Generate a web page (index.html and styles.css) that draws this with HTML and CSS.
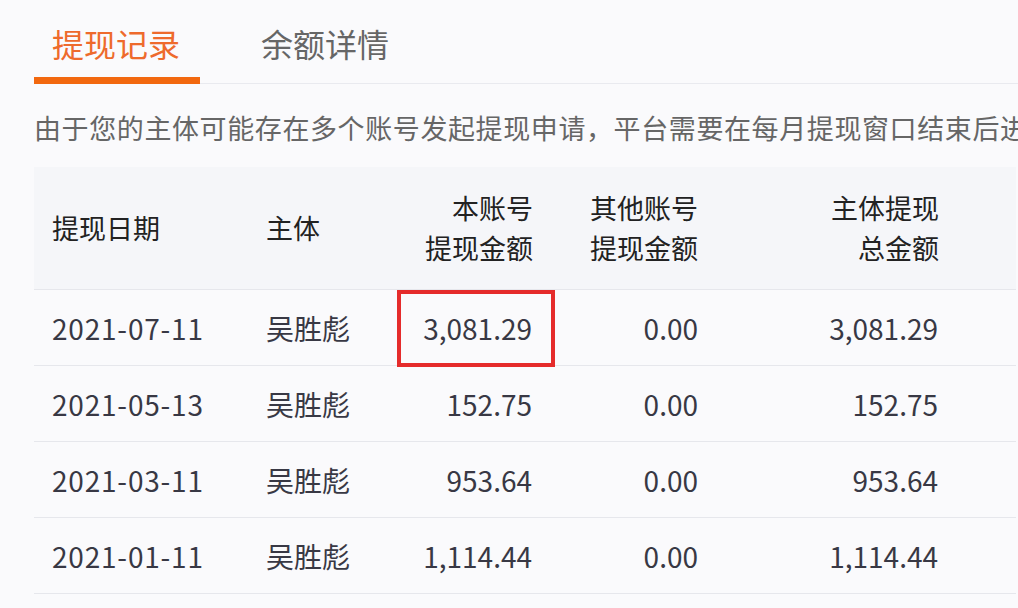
FILE: index.html
```html
<!DOCTYPE html>
<html lang="zh-CN">
<head>
<meta charset="utf-8">
<title>提现记录</title>
<link rel="stylesheet" href="styles.css">
</head>
<body>
<div class="page">
  <div class="tabs">
    <div class="tab active">提现记录</div>
    <div class="tab">余额详情</div>
  </div>
  <p class="notice">由于您的主体可能存在多个账号发起提现申请，平台需要在每月提现窗口结束后进</p>
  <table class="records">
    <colgroup>
      <col class="c-date"><col class="c-owner"><col class="c-own"><col class="c-other"><col class="c-total"><col>
    </colgroup>
    <thead>
      <tr>
        <th class="left">提现日期</th>
        <th class="left">主体</th>
        <th class="right">本账号<br>提现金额</th>
        <th class="right">其他账号<br>提现金额</th>
        <th class="right">主体提现<br>总金额</th>
        <th></th>
      </tr>
    </thead>
    <tbody>
      <tr>
        <td class="date">2021-07-11</td><td>吴胜彪</td><td class="right mark"><span class="hl"></span>3,081.29</td><td class="right">0.00</td><td class="right">3,081.29</td><td></td>
      </tr>
      <tr>
        <td class="date">2021-05-13</td><td>吴胜彪</td><td class="right">152.75</td><td class="right">0.00</td><td class="right">152.75</td><td></td>
      </tr>
      <tr>
        <td class="date">2021-03-11</td><td>吴胜彪</td><td class="right">953.64</td><td class="right">0.00</td><td class="right">953.64</td><td></td>
      </tr>
      <tr>
        <td class="date">2021-01-11</td><td>吴胜彪</td><td class="right">1,114.44</td><td class="right">0.00</td><td class="right">1,114.44</td><td></td>
      </tr>
    </tbody>
  </table>
</div>
</body>
</html>
```
FILE: styles.css
```css
html, body {
  margin: 0;
  padding: 0;
  background: #fafafc;
}
body {
  font-family: "Noto Sans CJK SC", "Noto Sans", sans-serif;
  color: #333;
  width: 1018px;
  height: 608px;
  overflow: hidden;
}
.page {
  padding-left: 34px;
  overflow: hidden;
}
.tabs {
  display: flex;
  border-bottom: 1px solid #e9eaef;
}
.tab {
  font-size: 32px;
  line-height: 48px;
  padding: 19px 20px 16px 18px;
  color: #666;
}
.tab + .tab {
  margin-left: 43px;
}
.tab.active {
  color: #ee6a2c;
  padding-bottom: 9px;
  border-bottom: 7px solid #f2680f;
  margin-bottom: -1px;
}
.notice {
  margin: 24px 0 19px;
  font-size: 27px;
  letter-spacing: 0.6px;
  line-height: 40px;
  color: #666;
  white-space: nowrap;
  overflow: hidden;
}
.records {
  border-collapse: collapse;
  table-layout: fixed;
  width: 982px;
}
.c-date { width: 214px; }
.c-owner { width: 152px; }
.c-own { width: 150px; }
.c-other { width: 166px; }
.c-total { width: 240px; }
.records th {
  background: #f5f6f9;
  height: 122px;
  font-size: 27px;
  font-weight: normal;
  line-height: 40px;
  color: #222;
  padding: 0 18px;
  border-bottom: 1px solid #e6e7ec;
}
.records th:nth-child(3),
.records th:nth-child(5) {
  padding-right: 17px;
}
.records td {
  height: 75px;
  font-size: 28px;
  line-height: 40px;
  color: #383844;
  padding: 0 18px;
  border-bottom: 1px solid #e6e7ec;
  white-space: nowrap;
}
.records td.date {
  letter-spacing: 0.8px;
}
.left { text-align: left; }
.right { text-align: right; }
.mark { position: relative; }
.hl {
  position: absolute;
  left: -3px;
  right: -5px;
  top: 0;
  bottom: -2px;
  border: 4px solid #e52b2b;
}
```
